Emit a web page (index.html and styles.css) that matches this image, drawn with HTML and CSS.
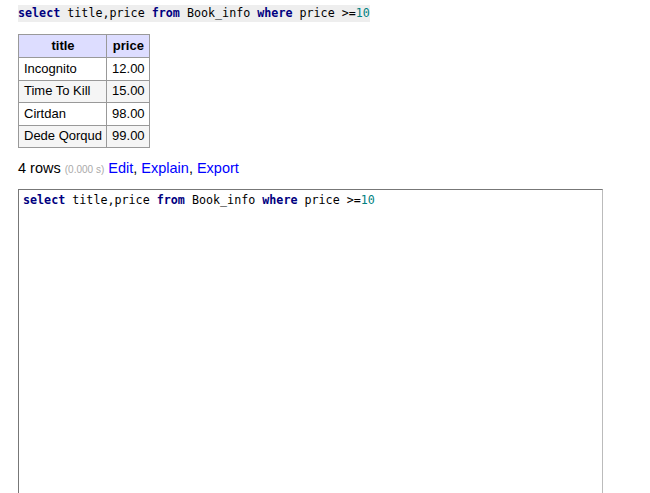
FILE: index.html
```html
<!DOCTYPE html>
<html>
<head>
<meta charset="utf-8">
<link rel="stylesheet" href="styles.css">
</head>
<body>
<div class="content">
  <p class="query"><code class="sql"><span class="kw">select</span> title,price <span class="kw">from</span> Book_info <span class="kw">where</span> price &gt;=<span class="num">10</span></code></p>
  <table class="result">
    <thead>
      <tr><th>title</th><th>price</th></tr>
    </thead>
    <tbody>
      <tr><td>Incognito</td><td>12.00</td></tr>
      <tr class="odd"><td>Time To Kill</td><td>15.00</td></tr>
      <tr><td>Cirtdan</td><td>98.00</td></tr>
      <tr class="odd"><td>Dede Qorqud</td><td>99.00</td></tr>
    </tbody>
  </table>
  <p class="summary">4 rows <span class="time">(0.000 s)</span> <a href="#">Edit</a>, <a href="#">Explain</a>, <a href="#">Export</a></p>
  <div class="editor"><code class="sql"><span class="kw">select</span> title,price <span class="kw">from</span> Book_info <span class="kw">where</span> price &gt;=<span class="num">10</span></code></div>
</div>
</body>
</html>
```
FILE: styles.css
```css
html, body {
  margin: 0;
  padding: 0;
  background: #fff;
  color: #000;
}
body {
  font-family: "Liberation Sans", Arial, sans-serif;
  font-size: 13px;
  line-height: 1.25;
}
.content {
  padding: 5px 18px 0 18px;
}
.query {
  margin: 0 0 12px 0;
}
.sql {
  font-family: "DejaVu Sans Mono", monospace;
  font-size: 11.7px;
  line-height: 17px;
}
.query .sql {
  background: #eee;
  display: inline-block;
}
.kw {
  color: #000080;
  font-weight: bold;
}
.num {
  color: #008080;
}
.result {
  border-collapse: collapse;
  margin: 0;
}
.result th, .result td {
  border: 1px solid #999;
  padding: 2.6px 4px 2.6px 5px;
  text-align: left;
}
.result th {
  background: #ddf;
  font-weight: bold;
  text-align: center;
  padding-top: 3.1px;
  padding-bottom: 3.1px;
}
.result tr.odd td {
  background: #f5f5f5;
}
.summary {
  font-size: 14.5px;
  margin: 11px 0 12px 0;
}
.summary .time {
  font-size: 10px;
  color: #aaa;
}
.summary a {
  color: #00f;
  text-decoration: none;
}
.editor {
  width: 575px;
  height: 320px;
  border: 1px solid;
  border-color: #777 #bbb #bbb #777;
  padding: 2px 4px;
}
```
